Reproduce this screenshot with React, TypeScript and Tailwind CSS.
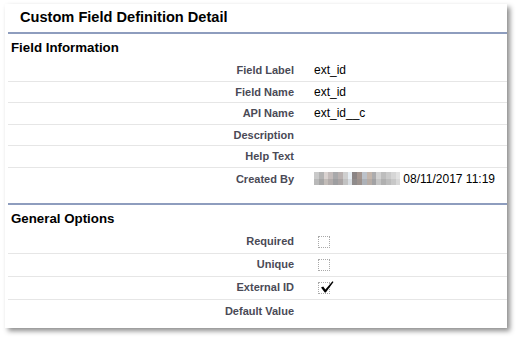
import React from "react";

type Row = { label: string; value?: React.ReactNode };

const pixTop = [
  "#c9c9c9", "#b3b3b3", "#d9d2d0", "#c4bcbb", "#a9a9ab", "#b9b1b0", "#cfcfcf", "#e6edf3", "#8a8484",
  "#a49690", "#bcc2ca", "#c4b6ac", "#acacae", "#d2d2d2", "#bdbdbd", "#cacaca", "#d6d6d6", "#e2e2e2",
];
const pixBottom = [
  "#b9b9b9", "#a6a6a6", "#c2bcb8", "#b2acab", "#9e9ea0", "#aaa4a4", "#c2c2c2", "#d8dde2", "#8f8b8b",
  "#9c928e", "#adb1b7", "#b6aca6", "#a2a2a4", "#c4c4c4", "#b0b0b0", "#bcbcbc", "#c8c8c8", "#d8d8d8",
];

function BlurredName() {
  return (
    <span className="mr-[3px] inline-flex flex-col align-middle">
      <span className="flex">
        {pixTop.map((c, i) => (
          <span key={i} className="block h-[7px] w-[4.8px]" style={{ background: c }} />
        ))}
      </span>
      <span className="flex">
        {pixBottom.map((c, i) => (
          <span key={i} className="block h-[6px] w-[4.8px]" style={{ background: c }} />
        ))}
      </span>
    </span>
  );
}

function Checkbox({ checked }: { checked?: boolean }) {
  return (
    <span className="relative ml-[4px] mt-[1px] block h-[12px] w-[12px] border border-dotted border-[#a9a9a9]">
      {checked && (
        <svg
          viewBox="0 0 16 14"
          className="absolute left-[1px] top-[-2px] h-[12px] w-[14px]"
        >
          <path d="M1 7.6 L3.6 6.4 L6.1 10 L14.4 0.4 L15.6 1.3 L6.6 13.4 L5.4 13.4 Z" fill="#000" />
        </svg>
      )}
    </span>
  );
}

function Section({
  title,
  rows,
  rowH,
  headerCls,
}: {
  title: string;
  rows: Row[];
  rowH: string;
  headerCls: string;
}) {
  return (
    <section className="border-t-2 border-[#8e9dbe]">
      <h3 className={`${headerCls} flex items-center pl-[3px] text-[13.3px] font-bold text-black`}>{title}</h3>
      <div>
        {rows.map((r, i) => (
          <div
            key={r.label}
            className={`${rowH} flex items-center ${i < rows.length - 1 ? "border-b border-[#e6e6e6]" : ""}`}
          >
            <div className="w-[296px] pr-[10px] text-right text-[11px] font-bold text-[#4a4a56]">
              {r.label}
            </div>
            <div className="flex items-center pl-[10px] text-[12px] text-black">{r.value}</div>
          </div>
        ))}
      </div>
    </section>
  );
}

export default function App() {
  const fieldRows: Row[] = [
    { label: "Field Label", value: "ext_id" },
    { label: "Field Name", value: "ext_id" },
    { label: "API Name", value: "ext_id__c" },
    { label: "Description" },
    { label: "Help Text" },
    {
      label: "Created By",
      value: (
        <>
          <BlurredName />
          <span>08/11/2017 11:19</span>
        </>
      ),
    },
  ];

  const optionRows: Row[] = [
    { label: "Required", value: <Checkbox /> },
    { label: "Unique", value: <Checkbox /> },
    { label: "External ID", value: <Checkbox checked /> },
    { label: "Default Value" },
  ];

  return (
    <div
      className="h-[337px] w-[516px] bg-white pl-[5px] pt-[4px]"
      style={{ fontFamily: '"Liberation Sans", Arial, sans-serif' }}
    >
      <div className="h-[324px] w-[502px] bg-white shadow-[3px_3px_5px_rgba(0,0,0,0.45)]">
        {/* Titel */}
        <h2 className="flex h-[28px] items-center pl-[15px] text-[14.6px] font-bold text-black">
          Custom Field Definition Detail
        </h2>

        <div className="ml-[3px]">
          <div className="mb-[13px]">
            <Section title="Field Information" rows={fieldRows} rowH="h-[21.6px]" headerCls="h-[26px] pt-[1px]" />
          </div>
          <Section title="General Options" rows={optionRows} rowH="h-[23px]" headerCls="h-[26px] pt-[3px]" />
        </div>
      </div>
    </div>
  );
}
